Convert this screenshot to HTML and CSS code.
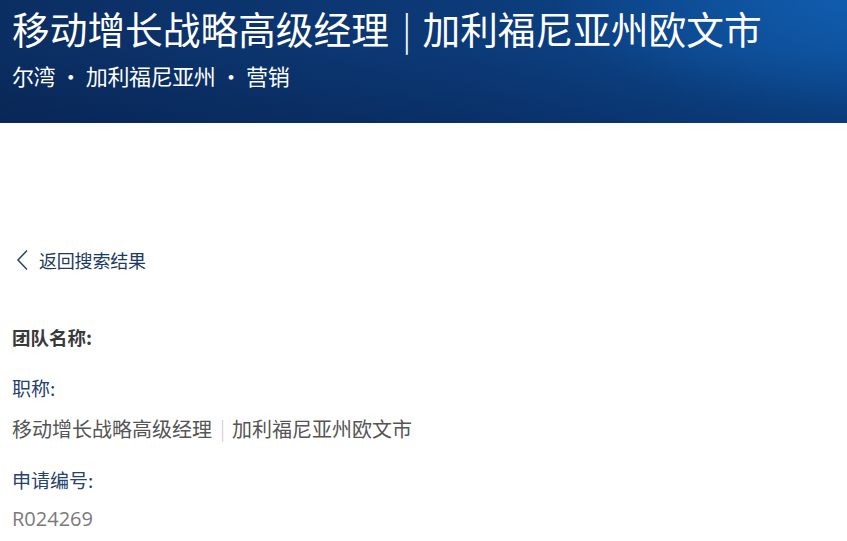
FILE: index.html
```html
<!DOCTYPE html>
<html lang="zh-CN">
<head>
<meta charset="utf-8">
<link rel="stylesheet" href="styles.css">
</head>
<body>
<header class="hero">
  <h1 class="hero-title">移动增长战略高级经理<span class="sep">|</span>加利福尼亚州欧文市</h1>
  <div class="hero-sub">尔湾 · 加利福尼亚州 · 营销</div>
</header>
<main class="content">
  <a class="back" href="#">
    <svg class="chev" width="14" height="22" viewBox="0 0 14 22"><path d="M12 1.5 L3 11 L12 20.5" fill="none" stroke="#2d4a70" stroke-width="1.6"/></svg>
    <span>返回搜索结果</span>
  </a>
  <div class="field team">团队名称:</div>
  <div class="field label">职称:</div>
  <div class="field value">移动增长战略高级经理<span class="sep">|</span>加利福尼亚州欧文市</div>
  <div class="field label">申请编号:</div>
  <div class="field value num">R024269</div>
</main>
</body>
</html>
```
FILE: styles.css
```css
* { box-sizing: border-box; }
html, body { margin: 0; padding: 0; background: #fff; }
body {
  font-family: "Noto Sans CJK SC", "Noto Sans", sans-serif;
  width: 847px;
  height: 541px;
  overflow: hidden;
}
.hero {
  height: 123px;
  padding: 0 0 0 12px;
  background:
    radial-gradient(ellipse 420px 160px at 840px 0px, rgba(20,110,200,0.5), rgba(20,110,200,0) 70%),
    linear-gradient(180deg, rgba(0,0,0,0) 40%, rgba(0,10,40,0.22) 100%),
    linear-gradient(90deg, #0b2e62 0%, #0c3a78 55%, #0c4a92 100%);
  color: #fff;
}
.hero-title {
  margin: 0;
  font-size: 37.7px;
  font-weight: 400;
  line-height: 56px;
  white-space: nowrap;
}
.hero-title .sep {
  display: inline-block;
  margin: 0 11px 0 13px;
  font-weight: 300;
}
.hero-sub {
  margin-top: 4px;
  font-size: 22px;
  line-height: 30px;
  letter-spacing: -0.4px;
}
.content {
  padding: 124px 0 0 12px;
  display: flex;
  flex-direction: column;
  align-items: flex-start;
}
.back {
  display: flex;
  align-items: center;
  gap: 10px;
  text-decoration: none;
  color: #1d3a62;
  font-size: 18px;
  line-height: 26px;
  margin-left: 3px;
  letter-spacing: -0.2px;
}
.chev { display: block; }
.field {
  line-height: 26px;
}
.team {
  margin-top: 51px;
  font-size: 18.5px;
  font-weight: 700;
  color: #3a3a3a;
}
.label {
  color: #25436b;
  font-size: 19px;
  margin-top: 25px;
}
.value {
  color: #555;
  font-size: 20px;
  margin-top: 15px;
}
.value .sep {
  display: inline-block;
  margin: 0 7px 0 8px;
  color: #c8c8c8;
  font-weight: 300;
}
.num {
  font-family: "Open Sans", "Noto Sans", sans-serif;
  color: #7a7a7a;
  margin-top: 13px;
}
```
